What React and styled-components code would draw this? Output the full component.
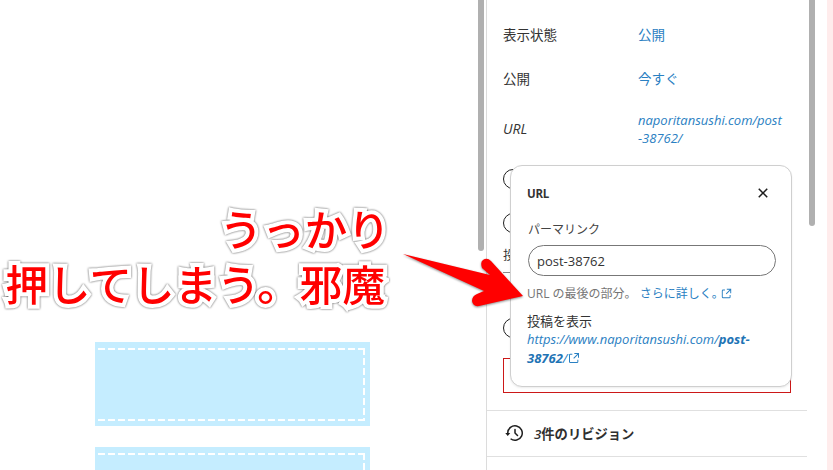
import React from "react";
import styled, { createGlobalStyle } from "styled-components";

const Global = createGlobalStyle`
  html, body { margin: 0; padding: 0; background: #fff; }
  body { font-family: "Open Sans", "Noto Sans CJK JP", sans-serif; color: #333; }
  * { box-sizing: border-box; }
`;

const Page = styled.div`
  position: relative;
  display: flex;
  width: 833px;
  height: 470px;
  overflow: hidden;
  background: #fff;
`;

const Canvas = styled.main`
  position: relative;
  flex: 0 0 487px;
  display: flex;
  flex-direction: column;
  gap: 21px;
  padding: 342px 0 0 95px;
  border-right: 1px solid #dcdcdc;
`;

const Placeholder = styled.div`
  flex: none;
  width: 275px;
  height: 84px;
  padding: 6px 5px 5px 3px;
  background: #c5edff;
`;

const DashedFrame = styled.div`
  width: 100%;
  height: 100%;
  background-image:
    repeating-linear-gradient(90deg, #fff 0 7px, transparent 7px 10px),
    repeating-linear-gradient(90deg, #fff 0 7px, transparent 7px 10px),
    repeating-linear-gradient(180deg, #fff 0 7px, transparent 7px 10px);
  background-size: 100% 2px, 100% 2px, 2px 100%;
  background-position: 0 0, 0 100%, 100% 0;
  background-repeat: no-repeat;
`;

const Thumb = styled.div`
  position: absolute;
  top: ${(p) => p.$top}px;
  left: ${(p) => p.$left}px;
  width: 6px;
  height: ${(p) => p.$height}px;
  border-radius: 0 0 3px 3px;
  background: #b0b0b0;
`;

const Sidebar = styled.aside`
  position: relative;
  flex: 0 0 340px;
  padding-top: 13px;
`;

const Strip = styled.div`
  flex: 0 0 6px;
  background: #ffecec;
`;

const Fields = styled.section`
  width: 320px;
  padding: 0 16px 17px 16px;
  border-bottom: 1px solid #e0e0e0;
`;

const Row = styled.div`
  display: grid;
  grid-template-columns: 135px 150px;
  align-items: center;
  height: ${(p) => p.$height}px;
  font-size: ${(p) => (p.$latin ? 13 : 13.5)}px;
  line-height: 18px;
`;

const Label = styled.span`
  color: #333;
  font-style: ${(p) => (p.$italic ? "italic" : "normal")};
  font-size: ${(p) => (p.$italic ? "14px" : "inherit")};
`;

const Value = styled.a`
  color: #2a80c2;
  font-style: ${(p) => (p.$italic ? "italic" : "normal")};
`;

const RadioRow = styled.div`
  display: flex;
  align-items: center;
  height: 44px;
`;

const LastRadioRow = styled(RadioRow)`
  height: 40px;
  margin-top: 35px;
`;

const Radio = styled.span`
  display: block;
  width: 20px;
  height: 20px;
  border: 1px solid #1e1e1e;
  border-radius: 50%;
`;

const AuthorLabel = styled.div`
  height: 28px;
  padding-top: 1px;
  font-size: 12px;
  line-height: 20px;
  color: #333;
  border-bottom: 1px solid #8a8a8a;
`;

const RedBox = styled.div`
  height: 35px;
  margin-top: 10px;
  width: 288px;
  border: 1px solid #cc1818;
`;

const Revisions = styled.div`
  display: flex;
  align-items: center;
  gap: 7px;
  width: 320px;
  height: 46px;
  padding: 0 0 1px 16px;
  border-bottom: 1px solid #e0e0e0;
  font-size: 13.3px;
  font-weight: 600;
  color: #2f2f2f;
`;

const Slanted = styled.span`
  font-style: italic;
`;

const Popover = styled.div`
  position: absolute;
  left: 23px;
  top: 165px;
  width: 282px;
  height: 222px;
  padding: 15px 16px 0 16px;
  background: #fff;
  border: 1px solid #cfcfcf;
  border-radius: 12px;
  box-shadow: 0 1px 2px rgba(0, 0, 0, 0.08);
`;

const PopHeader = styled.div`
  display: flex;
  align-items: center;
  justify-content: space-between;
  height: 24px;
  margin-bottom: 16px;
`;

const PopTitle = styled.h2`
  margin: 0;
  font-size: 11.5px;
  font-weight: 700;
  letter-spacing: -0.3px;
  color: #333;
`;

const CloseIcon = styled.svg`
  display: block;
  width: 24px;
  height: 24px;
  fill: #1e1e1e;
`;

const FieldLabel = styled.div`
  padding-left: 1px;
  font-size: 12px;
  line-height: 18px;
  color: #444;
  margin-bottom: 6px;
`;

const Input = styled.div`
  display: flex;
  align-items: center;
  width: 248px;
  height: 31px;
  margin-left: 1px;
  padding-left: 8px;
  border: 1px solid #777;
  border-radius: 16px;
  font-size: 13px;
  color: #333;
`;

const Help = styled.p`
  display: flex;
  align-items: center;
  height: 18px;
  margin: 8px 0 0;
  font-size: 12px;
  color: #757575;
  white-space: pre;
`;

const HelpLink = styled.a`
  display: inline-flex;
  align-items: center;
  color: #2a80c2;
`;

const ExtIcon = styled.svg`
  display: inline-block;
  flex: none;
  width: ${(p) => p.$size}px;
  height: ${(p) => p.$size}px;
  margin-left: ${(p) => p.$gap}px;
  fill: #2a80c2;
  vertical-align: -3px;
`;

const ViewTitle = styled.div`
  margin-top: 10px;
  font-size: 13px;
  line-height: 18px;
  color: #333;
`;

const ViewLink = styled.a`
  display: block;
  font-size: 13px;
  line-height: 19px;
  font-style: italic;
  color: #2a80c2;
  overflow-wrap: anywhere;
  width: 232px;
  strong { font-weight: 700; color: #1f74b5; }
`;

const Annotation = styled.div`
  position: absolute;
  right: ${(p) => p.$right}px;
  top: ${(p) => p.$top}px;
  font-family: "Noto Sans CJK JP", sans-serif;
  font-size: 42.6px;
  font-weight: 500;
  line-height: 50px;
  white-space: nowrap;
  color: #ff0000;
  -webkit-text-stroke: 8px #fff;
  paint-order: stroke fill;
  filter: drop-shadow(0 0.5px 0.8px #555);
`;

const Arrow = styled.svg`
  position: absolute;
  left: 395px;
  top: 250px;
  width: 135px;
  height: 62px;
  fill: #ff0000;
  filter: drop-shadow(0 1px 1px rgba(0, 0, 0, 0.45));
`;

const External = ({ size, gap }) => (
  <ExtIcon $size={size} $gap={gap} viewBox="0 0 24 24">
    <path d="M19.5 4.5h-7V6h4.44l-5.97 5.97 1.06 1.06L18 7.06v4.44h1.5v-7Zm-13 1a2 2 0 0 0-2 2v10a2 2 0 0 0 2 2h10a2 2 0 0 0 2-2v-3H17v3a.5.5 0 0 1-.5.5h-10a.5.5 0 0 1-.5-.5v-10a.5.5 0 0 1 .5-.5h3V5.5h-3Z" />
  </ExtIcon>
);

export default function App() {
  return (
    <Page>
      <Global />
      <Canvas>
        <Placeholder><DashedFrame /></Placeholder>
        <Placeholder><DashedFrame /></Placeholder>
      </Canvas>
      <Sidebar>
        <Fields>
          <Row $height={44}><Label>表示状態</Label><Value>公開</Value></Row>
          <Row $height={44}><Label>公開</Label><Value>今すぐ</Value></Row>
          <Row $height={56} $latin><Label $italic>URL</Label><Value $italic>naporitansushi.com/post<br />-38762/</Value></Row>
          <RadioRow><Radio /></RadioRow>
          <RadioRow><Radio /></RadioRow>
          <AuthorLabel>投稿者</AuthorLabel>
          <LastRadioRow><Radio /></LastRadioRow>
          <RedBox />
        </Fields>
        <Revisions>
          <svg width="24" height="24" viewBox="0 0 24 24" fill="#1e1e1e">
            <path d="M5.5 12h1.75l-2.5 3-2.5-3H4a8 8 0 113.134 6.35l.907-1.194A6.5 6.5 0 105.5 12zm9.53 1.97l-2.28-2.28V8.5a.75.75 0 00-1.5 0V12a.747.747 0 00.218.529l1.282-.84-1.28.842 2.5 2.5a.75.75 0 101.06-1.061z" />
          </svg>
          <span><Slanted>3</Slanted>件のリビジョン</span>
        </Revisions>
        <Popover>
          <PopHeader>
            <PopTitle>URL</PopTitle>
            <CloseIcon viewBox="0 0 24 24">
              <path d="M12 13.06l3.712 3.713 1.061-1.06L13.061 12l3.712-3.712-1.06-1.06L12 10.938 8.288 7.227l-1.061 1.06L10.939 12l-3.712 3.712 1.06 1.061L12 13.061z" />
            </CloseIcon>
          </PopHeader>
          <FieldLabel>パーマリンク</FieldLabel>
          <Input>post-38762</Input>
          <Help>
            {"URL の最後の部分。 "}
            <HelpLink>
              さらに詳しく。
              <External size={15} gap={-5} />
            </HelpLink>
          </Help>
          <ViewTitle>投稿を表示</ViewTitle>
          <ViewLink>
            https://www.naporitansushi.com/<strong>post-38762</strong>/
            <External size={16} gap={-1} />
          </ViewLink>
        </Popover>
      </Sidebar>
      <Strip />
      <Thumb $left={478} $top={0} $height={251} />
      <Thumb $left={809} $top={0} $height={226} />
      <Annotation $right={443} $top={203}>うっかり</Annotation>
      <Annotation $right={448} $top={258}>押してしまう。邪魔</Annotation>
      <Arrow viewBox="395 250 135 62">
        <path d="M403 254 L490 275 L482 268 Q480 262 483 260 Q487 257 491 261 L523 296 L479 306 Q473 307 472 301 Q472 296 477 294 L484 291 Z" />
      </Arrow>
    </Page>
  );
}
